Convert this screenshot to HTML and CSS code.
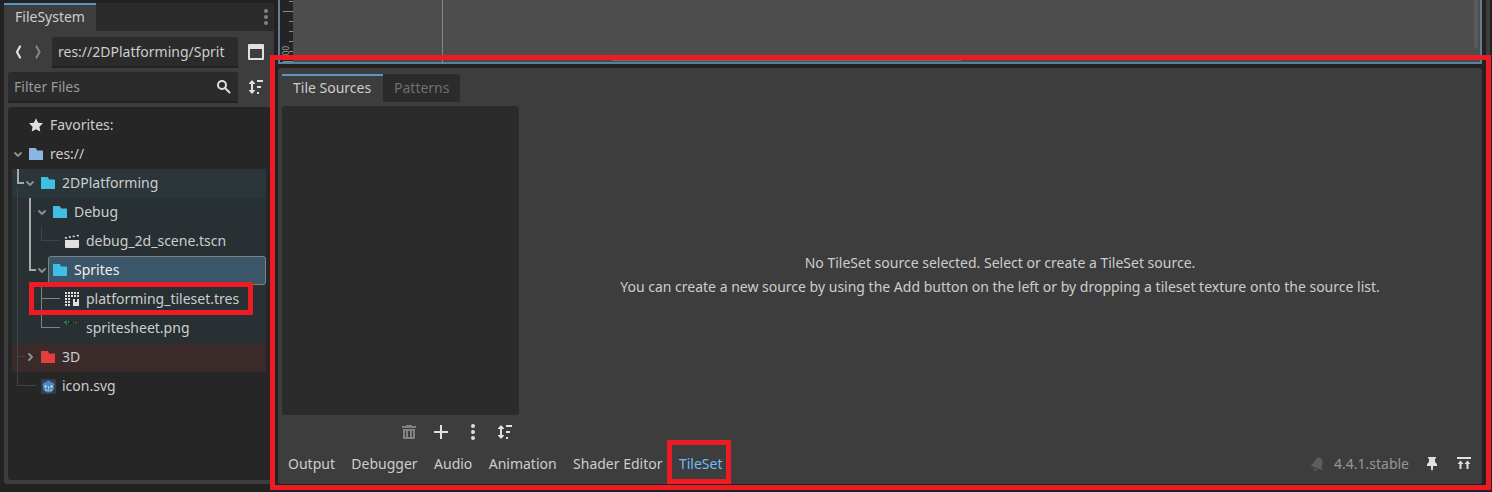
FILE: index.html
```html
<!DOCTYPE html>
<html lang="en">
<head>
<meta charset="utf-8">
<title>Godot Editor</title>
<link rel="stylesheet" href="styles.css">
</head>
<body>
<svg class="defs" width="0" height="0">
  <symbol id="folder" viewBox="0 0 16 16"><path fill="currentColor" d="M1 2.6Q1 2 1.6 2H7.4Q8 2 8.3 2.8L9 4.6H14.4Q15 4.6 15 5.2V13.4Q15 14 14.4 14H1.6Q1 14 1 13.4Z"/></symbol>
  <symbol id="down" viewBox="0 0 12 12"><path fill="none" stroke="currentColor" stroke-width="2" stroke-linecap="round" stroke-linejoin="round" d="M3 5l3 3 3-3"/></symbol>
  <symbol id="right" viewBox="0 0 12 12"><path fill="none" stroke="currentColor" stroke-width="2" stroke-linecap="round" stroke-linejoin="round" d="M5 3l3 3-3 3"/></symbol>
  <symbol id="sort" viewBox="0 0 16 16"><path fill="currentColor" d="M4 1l3 3.300V5H5v6h2v.700L4 15l-3-3.300V11h2V5H1v-.7zM9 1h6v2H9zM9 7h4v2H9zM9 13h2v2H9z"/></symbol>
  <symbol id="dots" viewBox="0 0 16 16"><g fill="currentColor"><circle cx="8" cy="2" r="2"/><circle cx="8" cy="8" r="2"/><circle cx="8" cy="14" r="2"/></g></symbol>
</svg>
<div class="editor">
  <aside class="dock">
    <div class="dock-tabs">
      <div class="tab active">FileSystem</div>
      <svg class="icon dock-menu"><use href="#dots"/></svg>
    </div>
    <div class="path-row">
      <svg class="icon nav" viewBox="0 0 16 16"><path d="M10 2.500L7 8l3 5.500" fill="none" stroke="#e0e0e0" stroke-width="2.200" stroke-linecap="round"/></svg>
      <svg class="icon nav" viewBox="0 0 16 16"><path d="M6.500 2.500L9.500 8l-3 5.500" fill="none" stroke="#828282" stroke-width="2.200" stroke-linecap="round"/></svg>
      <div class="field path"><span>res://2DPlatforming/Sprit</span></div>
      <svg class="icon side" viewBox="0 0 16 16"><path d="M1 0h14q1 0 1 1v14q0 1-1 1H1q-1 0-1-1V1q0-1 1-1zM2 5v9h12V5z" fill="#e0e0e0" fill-rule="evenodd"/></svg>
    </div>
    <div class="filter-row">
      <div class="field filter"><span>Filter Files</span>
        <svg class="icon search" viewBox="0 0 16 16"><g fill="none" stroke="#e0e0e0" stroke-width="2"><circle cx="6" cy="6" r="4"/><path d="M9 9l4.500 4.500" stroke-linecap="round"/></g></svg>
      </div>
      <svg class="icon side light"><use href="#sort"/></svg>
    </div>
    <div class="tree">
      <svg class="guides" viewBox="8 107 263 373" shape-rendering="crispEdges">
        <path fill="#3f4546" d="M17 187h1v199h-1zM17 356h7v1h-7zM17 385h19v1H17zM33 211h3v1h-3zM41 227h1v14h-1zM41 240h19v1H41z"/>
        <path fill="#7f8485" d="M41 285h1v43h-1zM41 298h19v1H41zM41 327h19v1H41z"/>
        <path fill="#a6a8a9" d="M17 169h2v13h5v2h-7zM29 198h2v71h5v2h-7z"/>
      </svg>
      <div class="row d0"><svg class="arrow"></svg><svg class="icon" viewBox="0 0 16 16"><path fill="#e0e0e0" d="M8 1.2l2.1 4.5 4.9.6-3.6 3.4.9 4.9L8 12.3l-4.3 2.3.9-4.9L1 6.3l4.9-.6z"/></svg><span>Favorites:</span></div>
      <div class="row d0"><svg class="arrow"><use href="#down"/></svg><svg class="icon f-root"><use href="#folder"/></svg><span>res://</span></div>
      <div class="row d1 teal-head"><svg class="arrow"><use href="#down"/></svg><svg class="icon f-teal"><use href="#folder"/></svg><span>2DPlatforming</span></div>
      <div class="row d2 teal"><svg class="arrow"><use href="#down"/></svg><svg class="icon f-teal"><use href="#folder"/></svg><span>Debug</span></div>
      <div class="row d3 teal"><svg class="arrow"></svg><svg class="icon" viewBox="0 0 16 16"><path fill="#e0e0e0" d="M1 7h14v7q0 1-1 1H2q-1 0-1-1zM.7 4.300l2-.4.4 1.500-2 .4zM4.600 3.500l2-.4.4 1.500-2 .4zM8.500 2.800l2-.4.4 1.500-2 .4zM12.600 2.100l2-.4.4 1.500-2 .4z"/></svg><span>debug_2d_scene.tscn</span></div>
      <div class="row d2 teal"><svg class="arrow"><use href="#down"/></svg><div class="selected"><svg class="icon f-teal"><use href="#folder"/></svg><span>Sprites</span></div></div>
      <div class="row d3 teal"><svg class="arrow"></svg><svg class="icon" viewBox="0 0 16 16" shape-rendering="crispEdges"><path fill="#e0e0e0" d="M1 1h2v2H1zM4 1h2v2H4zM7 1h2v2H7zM10 1h2v2h-2zM13 1h2v2h-2zM1 4h2v2H1zM4 4h2v2H4zM7 4h2v2H7zM10 4h2v2h-2zM13 4h2v2h-2zM1 7h2v2H1zM4 7h2v2H4zM1 10h2v2H1zM4 10h2v2H4zM1 13h2v2H1zM4 13h2v2H4zM9 8h2v3h2V8h2v7H9z"/></svg><span>platforming_tileset.tres</span></div>
      <div class="row d3 teal"><svg class="arrow"></svg><svg class="icon" viewBox="0 0 16 16" shape-rendering="crispEdges"><path fill="#13a04a" d="M1 1h2v1H1zM0 2h2v1H0zM4 1h1v2H4zM2 3h1v2H2z"/><path fill="#171c1d" d="M5 2h9v1H5z"/><path fill="#68703e" d="M9 2h1v1H9zM11 2h2v1h-2z"/></svg><span>spritesheet.png</span></div>
      <div class="row d1 red"><svg class="arrow"><use href="#right"/></svg><svg class="icon f-red"><use href="#folder"/></svg><span>3D</span></div>
      <div class="row d1"><svg class="arrow"></svg><svg class="icon" viewBox="0 0 16 16"><rect x="1" y="1" width="15" height="15" rx="1.5" fill="#363d52"/><path fill="#478cbf" d="M2.500 6.500l2-2.500 1.500.800.800-2h3.400l.8 2 1.500-.8 2 2.500-.7 1.500v3q-1.500 3.500-5.300 3.500T3.200 11V8z"/><path fill="#dceaf5" d="M4.500 7.500h2v2h-2zM10.500 7.500h2v2h-2zM8 8.500h1v2H8zM5 11.500h1.500v1H5zM7.700 11.800h1.500v1H7.700zM10.500 11.500H12v1h-1.500z"/></svg><span>icon.svg</span></div>
    </div>
  </aside>

  <main class="center">
    <section class="viewport">
      <div class="ruler">
        <svg width="13" height="62" shape-rendering="crispEdges"><path fill="#8a8a8a" d="M9 1h4v1H9zM3 11h10v1H3zM9 21h4v1H9zM9 31h4v1H9zM9 41h4v1H9zM9 51h4v1H9zM3 61h10v1H3z"/></svg>
        <span class="ruler-label">00</span>
      </div>
      <div class="canvas"><div class="axis"></div><div class="vscroll"></div><div class="hscroll"></div></div>
    </section>
    <section class="bottom">
      <div class="source-tabs"><div class="tab active sources-tab">Tile Sources</div><div class="tab off">Patterns</div></div>
      <div class="sources">
        <div class="source-col">
          <div class="source-list"></div>
          <div class="source-tools">
            <svg class="icon trash" viewBox="0 0 16 16"><path fill="currentColor" fill-rule="evenodd" d="M5 1h6v1h4v2H1V2h4zM2 5h12v9q0 1-1 1H3q-1 0-1-1zM4 7v6h1V7zM7 7v6h2V7zM11 7v6h1V7z"/></svg>
            <svg class="icon light" viewBox="0 0 16 16"><path fill="currentColor" d="M7 1h2v6h6v2H9v6H7V9H1V7h6z"/></svg>
            <svg class="icon light"><use href="#dots"/></svg>
            <svg class="icon light"><use href="#sort"/></svg>
          </div>
        </div>
        <div class="message"><p>No TileSet source selected. Select or create a TileSet source.</p><p>You can create a new source by using the Add button on the left or by dropping a tileset texture onto the source list.</p></div>
      </div>
      <nav class="bottom-bar">
        <span>Output</span><span>Debugger</span><span>Audio</span><span>Animation</span><span>Shader Editor</span><span class="current">TileSet</span>
        <div class="status">
          <svg class="icon bell" viewBox="0 0 16 16"><path fill="currentColor" d="M9.500 1l1 .8Q14.500 3 13.500 7l-1 4 .8 1.500-.8 1.500L2 10l.4-1.600 1.800-.8L6 4.500Q7 2 9 2.200zM5 12.300l3.500 1.300Q7.500 15.500 6 14.800T5 12.300z"/></svg>
          <span class="version">4.4.1.stable</span>
          <svg class="icon light pin" viewBox="0 0 16 16"><path fill="currentColor" d="M4 1h8v1.500h-1V6l2 2v2H9v3l-1 2-1-2v-3H3V8l2-2V2.500H4z"/></svg>
          <svg class="icon light" viewBox="0 0 16 16"><path fill="currentColor" d="M1 1h14v2H1zM4.500 4.500l3 3.500h-2v5h-2V8h-2zM11.500 4.500l3 3.500h-2v5h-2V8h-2z"/></svg>
        </div>
      </nav>
    </section>
  </main>
  <aside class="right-dock"></aside>
</div>
<div class="mark mark-panel"></div>
<div class="mark mark-file"></div>
<div class="mark mark-tab"></div>
</body>
</html>
```
FILE: styles.css
```css
* { box-sizing: border-box; }
body {
  margin: 0;
  width: 1492px;
  height: 492px;
  overflow: hidden;
  position: relative;
  background: #222222;
  color: #cdcdcd;
  font: 14px/20px "Noto Sans", "Open Sans", sans-serif;
}
p { margin: 0; }
span { white-space: nowrap; }
.defs { position: absolute; }
.icon { width: 16px; height: 16px; flex: none; display: block; }
.light { color: #e0e0e0; }
.editor { display: flex; height: 492px; }

/* File system dock */
.dock {
  width: 270px;
  height: 481px;
  margin: 3px 4px 0;
  flex: none;
  background: #3d3d3d;
  border-radius: 3px;
  display: flex;
  flex-direction: column;
}
.dock-tabs {
  display: flex;
  height: 28px;
  background: #2b2b2b;
  border-radius: 3px 3px 0 0;
  justify-content: space-between;
  align-items: center;
}
.tab {
  height: 28px;
  padding: 4px 11px 0;
  white-space: nowrap;
}
.tab.active { background: #3d3d3d; border-top: 2px solid #5c94c4; padding-top: 2px; }
.tab.off { background: #2b2b2b; color: #707070; border-radius: 0 3px 0 0; }
.sources-tab { width: 101px; }
.dock-menu { color: #828282; }
.path-row { display: flex; align-items: center; height: 31px; margin-top: 6px; padding-left: 6px; }
.nav { margin-bottom: 1px; }
.nav + .nav { margin-left: 4px; }
.path { width: 186px; margin-left: 6px; }
.field {
  height: 31px;
  background: #2b2b2b;
  border-bottom: 2px solid #222222;
  border-radius: 3px 3px 0 0;
  padding: 0 6px;
  display: flex;
  align-items: center;
  flex: none;
}
.side { margin: 0 0 1px 10px; }
.filter-row { display: flex; align-items: center; margin: 4px 0 0 4px; }
.filter { width: 230px; color: #9a9a9a; justify-content: space-between; }
.tree {
  position: relative;
  height: 373px;
  width: 263px;
  margin: 4px 0 0 4px;
  padding: 4px 5px 0 4px;
  background: #262626;
  border-radius: 3px;
}
.guides { position: absolute; left: 0; top: 0; width: 263px; height: 373px; }
.row { display: flex; align-items: center; height: 29px; padding-bottom: 1px; }
.row .icon { margin-right: 6px; }
.arrow { width: 12px; height: 12px; margin-right: 4px; flex: none; color: #8a8e8f; }
.d1 { padding-left: 12px; }
.d2 { padding-left: 24px; }
.d3 { padding-left: 36px; }
.teal-head { background: #2b363a; }
.teal { background: #283033; }
.red { background: #3b2a2a; }
.f-root { color: #8ab6e0; }
.f-teal { color: #3fbfe4; }
.f-red { color: #e43d3d; }
.selected {
  display: flex;
  align-items: center;
  flex: 1;
  height: 29px;
  margin: 0 0 -1px -4px;
  padding: 0 0 1px 3px;
  background: #3b5668;
  border: 1px solid #7b8185;
  border-radius: 3px;
  color: #f0f0f0;
}

/* Centre column */
.center { width: 1204px; flex: none; display: flex; flex-direction: column; }
.viewport { display: flex; height: 64px; border: solid #5b7f9f; border-width: 0 2px 2px; }
.ruler { position: relative; width: 13px; background: #242424; }
.ruler svg { display: block; }
.ruler-label {
  position: absolute;
  left: 1px;
  top: 46px;
  width: 10px;
  line-height: 10px;
  font-size: 8px;
  color: #a0a0a0;
  writing-mode: vertical-rl;
  transform: rotate(180deg);
}
.canvas { position: relative; flex: 1; background: #4d4d4d; }
.axis { position: absolute; left: 149px; top: 0; width: 1px; height: 64px; background: #709470; }
.vscroll { position: absolute; right: 2px; top: 0; width: 4px; height: 48px; background: #5a5a5a; border-radius: 0 0 2px 2px; }
.hscroll { position: absolute; left: 319px; bottom: 1px; width: 349px; height: 1px; background: #707070; }
.bottom {
  height: 416px;
  margin-top: 4px;
  padding: 6px 4px 0;
  background: #3d3d3d;
  border-radius: 3px;
}
.source-tabs { display: flex; }
.sources { display: flex; height: 342px; margin-top: 4px; }
.source-col { width: 237px; }
.source-list { height: 309px; background: #2b2b2b; border-radius: 3px; }
.source-tools { display: flex; justify-content: flex-end; gap: 16px; padding: 9px 6px 0 0; }
.trash { color: #828282; }
.message { flex: 1; text-align: center; padding: 145px 0 0 3px; line-height: 24px; }
.bottom-bar { display: flex; align-items: center; height: 20px; margin-top: 6px; padding-left: 6px; gap: 16.4px; }
.current { color: #70bafa; }
.status { margin-left: auto; display: flex; align-items: center; padding-right: 6px; }
.bell { color: #5d5d5d; }
.version { margin: 0 15px 0 9px; color: #969696; }
.pin { margin-right: 16px; }
.right-dock { width: 4px; height: 484px; margin-left: 4px; background: #3d3d3d; }

/* Highlight frames */
.mark { position: absolute; border: 5px solid #ed1c24; }
.mark-panel { left: 270px; top: 55px; width: 1221px; height: 435px; }
.mark-file { left: 29px; top: 282px; width: 224px; height: 33px; }
.mark-tab { left: 667px; top: 440px; width: 64px; height: 44px; }
```
